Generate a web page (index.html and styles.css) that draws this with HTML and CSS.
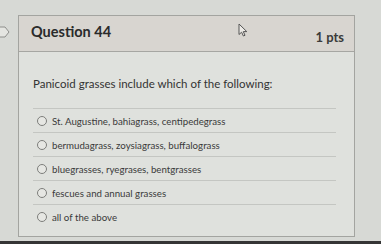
FILE: index.html
```html
<!DOCTYPE html>
<html>
<head>
<meta charset="utf-8">
<link rel="stylesheet" href="styles.css">
</head>
<body>
<div class="page">
  <svg class="flag" width="10" height="12" viewBox="0 0 10 12"><path d="M-4 1 H5 L9 6 L5 11 H-4" fill="#e4e5e1" stroke="#8e8f8c" stroke-width="1"/></svg>
  <div class="card">
    <div class="header">
      <span class="title">Question 44</span>
      <span class="pts">1 pts</span>
    </div>
    <div class="body">
      <p class="question">Panicoid grasses include which of the following:</p>
      <ul class="answers">
        <li class="answer"><span class="radio"></span>St. Augustine, bahiagrass, centipedegrass</li>
        <li class="answer"><span class="radio"></span>bermudagrass, zoysiagrass, buffalograss</li>
        <li class="answer"><span class="radio"></span>bluegrasses, ryegrases, bentgrasses</li>
        <li class="answer"><span class="radio"></span>fescues and annual grasses</li>
        <li class="answer last"><span class="radio"></span>all of the above</li>
      </ul>
    </div>
    <svg class="cursor" width="11" height="14" viewBox="0 0 11 14"><path d="M1 1 V11.5 L3.6 9.2 L5.4 13 L7 12.3 L5.3 8.6 H8.8 Z" fill="#eceae6" stroke="#555" stroke-width="1" stroke-linejoin="round"/></svg>
  </div>
</div>
<div class="bezel"></div>
</body>
</html>
```
FILE: styles.css
```css
html, body {
  margin: 0;
  padding: 0;
}
body {
  background: #d7d9d5;
  width: 381px;
  height: 244px;
  overflow: hidden;
  font-family: Lato, "Open Sans", sans-serif;
  color: #2e2f2e;
}
.page {
  padding: 15px 26px 0 18px;
  position: relative;
}
.flag {
  position: absolute;
  left: 0;
  top: 26px;
}
.card {
  position: relative;
  border: 1px solid #a3a4a0;
  background: #dfe1dd;
  height: 222px;
  box-sizing: border-box;
}
.header {
  height: 35px;
  background: #d8d5d0;
  border-bottom: 1px solid #a6a6a2;
  display: flex;
  justify-content: space-between;
  align-items: center;
  padding: 0 10px 0 12px;
}
.title {
  font-weight: 700;
  font-size: 14.5px;
  color: #2a2b2b;
  margin-top: -4px;
}
.pts {
  font-weight: 700;
  font-size: 13px;
  color: #3a3b3a;
  margin-top: 6px;
}
.body {
  padding: 0 18px 0 14px;
}
.question {
  margin: 0;
  height: 56px;
  box-sizing: border-box;
  padding-top: 25px;
  font-size: 11.5px;
  color: #333;
}
.answers {
  list-style: none;
  margin: 0;
  padding: 0;
}
.answer {
  height: 24px;
  border-top: 1px solid #c4c6c2;
  box-sizing: border-box;
  display: flex;
  align-items: center;
  font-size: 9.7px;
  color: #3a3a3a;
}
.radio {
  width: 8px;
  height: 8px;
  border: 1px solid #7d7e7b;
  border-radius: 50%;
  background: #e6e7e3;
  margin: 0 5px 0 4px;
  flex: none;
}
.cursor {
  position: absolute;
  left: 219px;
  top: 7px;
}
.bezel {
  margin-top: 4px;
  height: 4px;
  background: #353535;
}
```
